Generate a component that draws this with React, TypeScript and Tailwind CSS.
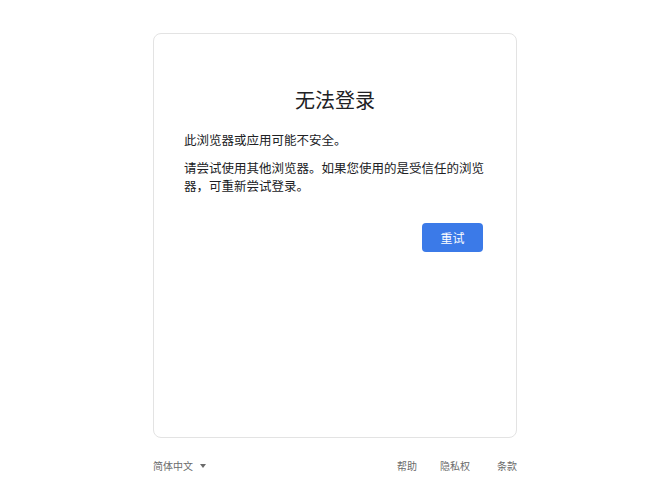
export default function App() {
  return (
    <div className="min-h-[498px] w-full bg-white font-['Noto_Sans_CJK_SC',sans-serif] text-[#202124]">
      <div className="ml-[153px] w-[364px] pt-[33px]">
        <div className="h-[405px] rounded-[8px] border border-[#e3e3e3] px-[30px] pt-[52px]">
          <h1 className="text-center text-[20px] leading-[28px] font-normal">无法登录</h1>
          <p className="mt-[17px] text-[12.5px] leading-[18px]">此浏览器或应用可能不安全。</p>
          <p className="mt-[10px] text-[12.5px] leading-[18px]">
            请尝试使用其他浏览器。如果您使用的是受信任的浏览器，可重新尝试登录。
          </p>
          <div className="mt-[28px] flex justify-end">
            <button className="mr-[3px] h-[29px] w-[61px] rounded-[4px] bg-[#3b7ae8] text-[12px] text-white">
              重试
            </button>
          </div>
        </div>
        <div className="mt-[20px] flex items-center text-[10px] leading-[16px] text-[#6b6b6b]">
          <div className="flex items-center">
            <span>简体中文</span>
            <span className="ml-[7px] h-0 w-0 border-x-[3px] border-t-[4px] border-x-transparent border-t-[#6b6b6b]" />
          </div>
          <div className="ml-auto flex items-center">
            <span>帮助</span>
            <span className="ml-[23px]">隐私权</span>
            <span className="ml-[27px]">条款</span>
          </div>
        </div>
      </div>
    </div>
  );
}
